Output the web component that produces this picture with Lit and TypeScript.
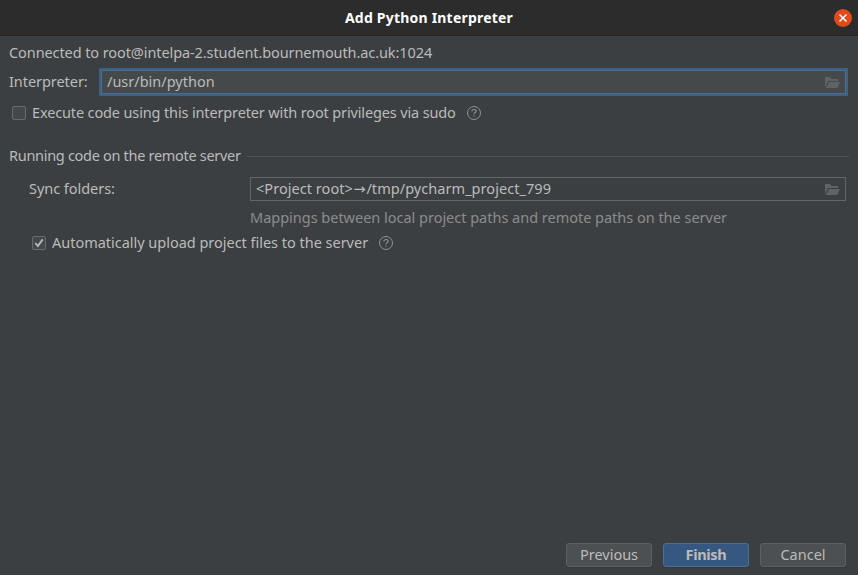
import { LitElement, html, css } from "lit";
import { customElement, property } from "lit/decorators.js";

const folderIcon = html`<svg class="folder" width="15" height="11" viewBox="0 0 15 11">
  <path d="M0 0H5L6.4 2H13V4H3L0.6 9.6L0 10.5Z" fill="#5c6467" />
  <path d="M4 5H15L12.2 11H0.9Z" fill="#5c6467" />
</svg>`;

const helpIcon = html`<svg class="help" width="16" height="16" viewBox="0 0 16 16" fill="none" stroke="#8d9194">
  <circle cx="8" cy="8" r="6.5" />
  <path d="M5.9 6.4C5.9 5.2 6.8 4.5 8 4.5S10.1 5.2 10.1 6.3C10.1 7.6 8 7.7 8 9.3" stroke-width="1.2" />
  <path d="M8 10.4V11.6" stroke-width="1.3" />
</svg>`;

@customElement("check-mark")
class CheckMark extends LitElement {
  @property({ type: Boolean }) checked = false;

  static styles = css`
    :host { display: block; width: 14px; height: 14px; flex: none; }
    .box { box-sizing: border-box; width: 14px; height: 14px; border: 1px solid #6b6b6b; border-radius: 2px; background: #43494a; }
    svg { display: block; }
  `;

  render() {
    return html`<div class="box">
      ${this.checked
        ? html`<svg width="12" height="12" viewBox="0 0 12 12"><path d="M2.3 6.2L4.9 9L9.7 2.4" fill="none" stroke="#b4b8ba" stroke-width="1.9" /></svg>`
        : null}
    </div>`;
  }
}

@customElement("app-root")
class AppRoot extends LitElement {
  static styles = css`
    :host { display: flex; flex-direction: column; box-sizing: border-box; width: 858px; height: 575px; overflow: hidden; background: #3c3f41; color: #bbbbbb; font-family: "Noto Sans", sans-serif; font-size: 14.5px; line-height: 20px; white-space: nowrap; }
    .title { display: flex; align-items: center; height: 35px; flex: none; background: #2c2c2c; border-bottom: 1px solid #232323; color: #fff; font-weight: 700; padding: 0 6px 0 24px; }
    .title h1 { flex: 1; margin: 0; font-size: 14px; text-align: center; letter-spacing: 0.21px; }
    .close { display: block; }
    .body { flex: 1; display: flex; flex-direction: column; padding: 7px 9px 0; }
    .row { display: flex; align-items: center; flex: none; height: 20px; }
    .t { display: block; padding-bottom: 2px; }
    .connected { letter-spacing: -0.09px; }
    .row.interp { height: 28px; margin: 5px 1px 0 0; }
    .interp .label { width: 90px; letter-spacing: -0.06px; }
    .field { display: flex; align-items: center; justify-content: space-between; box-sizing: border-box; flex: 1; }
    .focused { height: 28px; border: 2px solid #3d6185; outline: 1px solid #466d94; outline-offset: -3px; background: #45494a; padding: 0 6px; }
    .sudo { margin: 7px 0 0 3px; gap: 6px; letter-spacing: -0.139px; }
    .help { margin-left: 4px; }
    .section { margin-top: 23px; gap: 6px; }
    .section .t { letter-spacing: -0.3px; }
    .rule { flex: 1; height: 1px; background: #515151; }
    .row.sync { margin: 11px 3px 0 20px; height: 24px; }
    .sync .label { width: 221px; letter-spacing: -0.04px; }
    .plain { height: 24px; border: 1px solid #646464; padding: 0 5px; letter-spacing: 0.05px; }
    .arrow { display: inline-block; width: 13.5px; text-align: center; font: 14.5px/16px "DejaVu Sans", sans-serif; }
    .hint { margin: 7px 0 0 241px; color: #8c8c8c; letter-spacing: -0.015px; }
    .upload { margin: 5px 0 0 23px; gap: 6px; letter-spacing: -0.02px; }
    .buttons { display: flex; justify-content: flex-end; gap: 11px; margin: auto 3px 8px 0; }
    .btn { box-sizing: border-box; width: 86px; height: 24px; border: 1px solid #5e6060; border-radius: 3px; background: #4c5052; color: #bbbbbb; font: inherit; line-height: 20px; text-align: center; padding: 0; box-shadow: 0 1px 0 #36393b; }
    .primary { background: #365880; border-color: #4c708c; font-weight: 700; letter-spacing: -0.3px; }
  `;

  render() {
    return html`
      <div class="title">
        <h1>Add Python Interpreter</h1>
        <svg class="close" width="18" height="18" viewBox="0 0 18 18">
          <circle cx="9" cy="9" r="9" fill="#e2491b" />
          <path d="M5.5 5.5L12.5 12.5M12.5 5.5L5.5 12.5" stroke="#fff" stroke-width="1.5" />
        </svg>
      </div>
      <div class="body">
        <div class="row connected"><span class="t">Connected to root@intelpa-2.student.bournemouth.ac.uk:1024</span></div>
        <div class="row interp">
          <span class="t label">Interpreter:</span>
          <div class="field focused"><span class="t">/usr/bin/python</span>${folderIcon}</div>
        </div>
        <div class="row sudo">
          <check-mark></check-mark>
          <span class="t">Execute code using this interpreter with root privileges via sudo</span>${helpIcon}
        </div>
        <div class="row section"><span class="t">Running code on the remote server</span><div class="rule"></div></div>
        <div class="row sync">
          <span class="t label">Sync folders:</span>
          <div class="field plain"><span class="t">&lt;Project root&gt;<span class="arrow">→</span>/tmp/pycharm_project_799</span>${folderIcon}</div>
        </div>
        <div class="row hint"><span class="t">Mappings between local project paths and remote paths on the server</span></div>
        <div class="row upload">
          <check-mark checked></check-mark>
          <span class="t">Automatically upload project files to the server</span>${helpIcon}
        </div>
        <div class="buttons">
          <button class="btn"><span class="t">Previous</span></button>
          <button class="btn primary"><span class="t">Finish</span></button>
          <button class="btn"><span class="t">Cancel</span></button>
        </div>
      </div>`;
  }
}
